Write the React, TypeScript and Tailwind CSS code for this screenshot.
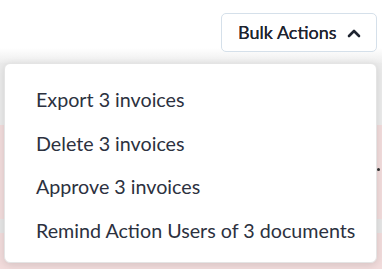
const actions = [
    'Export 3 invoices',
    'Delete 3 invoices',
    'Approve 3 invoices',
    'Remind Action Users of 3 documents',
];

const App = () => {
    return (
        <div className="relative w-[382px] h-[269px] overflow-hidden bg-white font-['Lato',sans-serif]">
            {/* page behind the menu */}
            <div className="h-[48px] bg-white" />
            <div className="h-[15px] bg-gradient-to-b from-white to-[#ededed]" />
            <div className="h-[62px] bg-[#ebebeb]" />
            <div className="h-[38px] bg-[#f2dcdc]" />
            <div className="h-[12px] bg-[#f2dcdc] flex justify-end items-center pr-[2px]">
                <span className="w-[3px] h-[3px] rounded-full bg-[#333]" />
            </div>
            <div className="h-[44px] bg-[#f2dcdc]" />
            <div className="h-[14px] bg-[#e6e6e6]" />
            <div className="h-[36px] bg-[#f2dcdc]" />

            <div className="absolute left-[221px] top-[13px]">
                <button className="flex items-center justify-between w-[156px] h-[39px] pl-[16px] pr-[15px] bg-white border border-[#d5e0ea] rounded-[5px] text-[18px] text-[#1f2430]">
                    <span className="[text-shadow:0_0_0.4px_#1f2430]">Bulk Actions</span>
                    <svg width="14" height="10" viewBox="0 0 14 10" fill="none" stroke="#1f2430" strokeWidth="2.6" strokeLinecap="round" strokeLinejoin="round">
                        <polyline points="2,8 7,3 12,8" />
                    </svg>
                </button>
            </div>

            <div className="absolute left-[4px] top-[63px] w-[373px] h-[200px] bg-white rounded-[6px] border border-[#e4e4e4] shadow-[0_2px_8px_rgba(0,0,0,0.12)] pt-[14px]">
                <ul className="flex flex-col">
                    {actions.map((a) => (
                        <li key={a} className="h-[43.7px] flex items-center pl-[31px] text-[19.7px] text-[#2c3140]">
                            {a}
                        </li>
                    ))}
                </ul>
            </div>
        </div>
    );
};

export default App;
